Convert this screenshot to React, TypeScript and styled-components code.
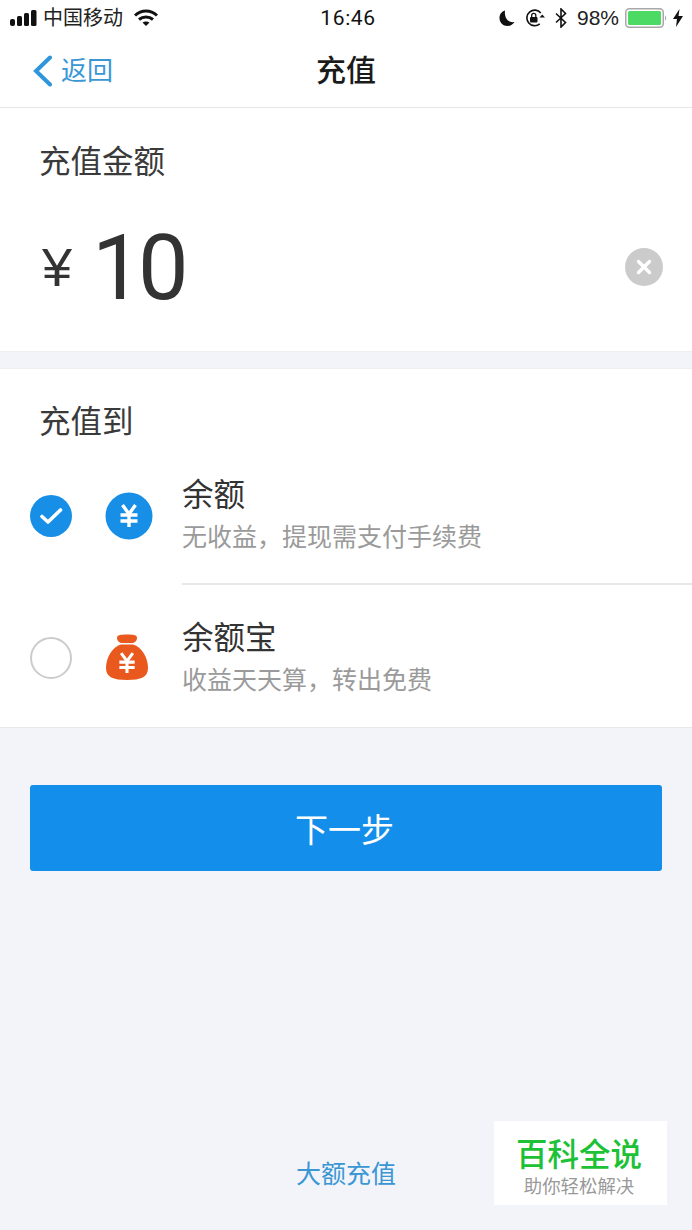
import React from 'react';
import styled, { createGlobalStyle } from 'styled-components';

const cjk = `"Liberation Sans", "Noto Sans CJK SC", sans-serif`;

const GlobalStyle = createGlobalStyle`
  html, body {
    margin: 0;
    padding: 0;
    background: #f3f4f9;
  }
  * {
    box-sizing: border-box;
  }
`;

const Page = styled.div`
  position: relative;
  width: 692px;
  height: 1230px;
  overflow: hidden;
  display: flex;
  flex-direction: column;
  background: #f3f4f9;
  font-family: ${cjk};
  color: #333;
`;

const Header = styled.div`
  background: #fff;
  height: 108px;
  border-bottom: 1px solid #e6e6e8;
  flex-shrink: 0;
`;

const StatusBar = styled.div`
  height: 36px;
  padding: 0 9px 0 10px;
  display: flex;
  align-items: center;
  justify-content: space-between;
  color: #111;
`;

const StatusSide = styled.div<{ $end?: boolean }>`
  width: 260px;
  display: flex;
  align-items: center;
  justify-content: ${p => (p.$end ? 'flex-end' : 'flex-start')};
`;

const Carrier = styled.span`
  font-size: 20px;
  line-height: 24px;
  margin: 0 11px 0 5px;
  color: #222;
`;

const Clock = styled.span`
  font-size: 21px;
  font-family: "Roboto", sans-serif;
  letter-spacing: 0.6px;
  margin-left: 3px;
`;

const StatusGap = styled.span<{ $width: number }>`
  width: ${p => p.$width}px;
`;

const Percent = styled.span`
  font-size: 21px;
  font-family: "Liberation Sans", sans-serif;
  margin: 0 6px 0 10px;
  color: #222;
`;

const Nav = styled.div`
  height: 71px;
  position: relative;
  display: flex;
  align-items: center;
  justify-content: center;
  padding-bottom: 1px;
`;

const Back = styled.div`
  position: absolute;
  left: 33px;
  top: 16px;
  display: flex;
  align-items: center;
  gap: 8px;
  color: #3a97d4;
  font-size: 26px;
  line-height: 38px;
`;

const Title = styled.div`
  font-size: 30px;
  font-weight: 500;
  color: #1a1a1a;
  line-height: 40px;
`;

const Section = styled.section`
  background: #fff;
  flex-shrink: 0;
`;

const AmountSection = styled(Section)`
  height: 244px;
  padding: 31px 29px 0 39px;
  border-bottom: 1px solid #eeeef2;
`;

const SectionTitle = styled.div`
  font-size: 31.5px;
  line-height: 46px;
  color: #3a3a3a;
`;

const AmountRow = styled.div`
  margin-top: 36px;
  display: flex;
  align-items: center;
  height: 92px;
`;

const Currency = styled.span`
  font-size: 54px;
  font-family: "Liberation Sans", sans-serif;
  line-height: 60px;
  width: 53px;
  padding-left: 3px;
  color: #333;
`;

const Amount = styled.span`
  font-size: 90px;
  font-family: "Roboto", sans-serif;
  font-weight: 400;
  letter-spacing: -4.5px;
  line-height: 92px;
  color: #333;
  flex: 1;
  padding-top: 4px;
`;

const ClearButton = styled.div`
  width: 38px;
  height: 38px;
  border-radius: 50%;
  background: #cbcbcb;
  display: flex;
  align-items: center;
  justify-content: center;
`;

const TargetSection = styled(Section)`
  height: 360px;
  margin-top: 16px;
  padding-top: 30px;
  border-top: 1px solid #eeeef2;
  border-bottom: 1px solid #e9e9ed;
  display: flex;
  flex-direction: column;
`;

const TargetTitle = styled(SectionTitle)`
  padding-left: 39px;
  margin-bottom: 2px;
`;

const Option = styled.div<{ $last?: boolean }>`
  height: ${p => (p.$last ? '140px' : '138px')};
  padding-top: ${p => (p.$last ? '5px' : '0')};
  display: flex;
  align-items: center;
  padding-left: 30px;
`;

const Radio = styled.div<{ $checked?: boolean }>`
  width: 42px;
  height: 42px;
  border-radius: 50%;
  flex-shrink: 0;
  display: flex;
  align-items: center;
  justify-content: center;
  background: ${p => (p.$checked ? '#178fe6' : '#fff')};
  border: ${p => (p.$checked ? 'none' : '2px solid #cccccc')};
`;

const OptionIcon = styled.div`
  width: 48px;
  height: 48px;
  margin-left: 33px;
  flex-shrink: 0;
`;

const OptionBody = styled.div<{ $divided?: boolean }>`
  align-self: stretch;
  flex: 1;
  margin-left: 29px;
  display: flex;
  flex-direction: column;
  justify-content: center;
  border-bottom: ${p => (p.$divided ? '2px solid #e8e8e8' : 'none')};
`;

const OptionName = styled.div`
  font-size: 31.5px;
  line-height: 44px;
  color: #333;
`;

const OptionHint = styled.div`
  font-size: 25px;
  line-height: 40px;
  color: #9a9a9a;
`;

const NextButton = styled.button`
  display: block;
  flex-shrink: 0;
  margin: 57px 30px 0;
  height: 86px;
  width: 632px;
  padding: 0 3px 0 0;
  border: none;
  border-radius: 3px;
  background: #148eeb;
  color: #fff;
  font-family: ${cjk};
  font-size: 33px;
`;

const LargeLink = styled.div`
  margin-top: 284px;
  text-align: center;
  font-size: 25px;
  line-height: 38px;
  color: #3a97d4;
`;

const Watermark = styled.div`
  position: absolute;
  left: 494px;
  top: 1121px;
  width: 173px;
  height: 84px;
  background: #fff;
  display: flex;
  flex-direction: column;
  align-items: center;
  padding: 14px 3px 0 0;
`;

const WatermarkTitle = styled.div`
  font-size: 31.5px;
  font-weight: 500;
  line-height: 40px;
  color: #1cc135;
`;

const WatermarkSub = styled.div`
  font-size: 18.4px;
  line-height: 24px;
  color: #999;
`;

const SignalIcon = () => (
  <svg width="28" height="18" viewBox="0 0 28 18" fill="#111">
    <rect x="0" y="10" width="5" height="7" rx="2" />
    <rect x="7" y="7" width="5" height="10" rx="1.5" />
    <rect x="14" y="4" width="5" height="13" rx="1.5" />
    <rect x="21" y="1" width="5.5" height="16" rx="1.5" />
  </svg>
);

const WifiIcon = () => (
  <svg width="24" height="18" viewBox="0 0 24 18" fill="none" stroke="#111" strokeWidth="3">
    <path d="M1 6.5 C7.5 0.5 16.5 0.5 23 6.5" />
    <path d="M5 10.5 C9 7 15 7 19 10.5" />
    <path d="M12 17 L8.5 13.5 C10.5 12 13.5 12 15.5 13.5 Z" fill="#111" stroke="none" />
  </svg>
);

const MoonIcon = () => (
  <svg width="16" height="17" viewBox="0 0 16 17" fill="#111">
    <path d="M6 0.5 C2.5 1.5 0.5 4.5 0.5 8 C0.5 12.5 4 16 8.5 16 C11.5 16 14 14.5 15.5 12 C10.5 13 5 9.5 6 0.5 Z" />
  </svg>
);

const RotationLockIcon = () => (
  <svg width="20" height="18" viewBox="0 0 20 18">
    <path d="M14.8 14.8 A7.8 7.8 0 1 1 15.8 4" fill="none" stroke="#111" strokeWidth="1.6" />
    <path d="M14.5 8.5 L20 8.5 L17.2 5.5 Z" fill="#111" />
    <rect x="5" y="8" width="7.5" height="5.5" rx="1" fill="#111" />
    <path d="M6.7 8 V6.5 A2 2 0 0 1 10.8 6.5 V8" fill="none" stroke="#111" strokeWidth="1.3" />
  </svg>
);

const BluetoothIcon = () => (
  <svg width="12" height="20" viewBox="0 0 12 20" fill="none" stroke="#111" strokeWidth="1.6">
    <path d="M1 5.5 L10.5 14.5 L6 19 V1 L10.5 5.5 L1 14.5" />
  </svg>
);

const BatteryIcon = () => (
  <svg width="43" height="20" viewBox="0 0 43 20">
    <rect x="0.75" y="0.75" width="37.5" height="18.5" rx="3.5" fill="#fff" stroke="#a8a8a8" strokeWidth="1.5" />
    <rect x="3" y="3" width="33" height="14" rx="1.5" fill="#4cd964" />
    <path d="M40 7.5 C41.5 8 41.5 12 40 12.5 Z" fill="#a8a8a8" />
  </svg>
);

const BoltIcon = () => (
  <svg width="10" height="18" viewBox="0 0 10 18" fill="#111">
    <path d="M6.5 0 L0 10 H4 L3 18 L10 7 H5.5 Z" />
  </svg>
);

const BackChevron = () => (
  <svg width="20" height="32" viewBox="0 0 20 32" fill="none" stroke="#2f96dc" strokeWidth="4" strokeLinecap="round">
    <path d="M17 2.5 L3 16 L17 29.5" />
  </svg>
);

const CrossIcon = () => (
  <svg width="16" height="16" viewBox="0 0 16 16" stroke="#fff" strokeWidth="3.4" strokeLinecap="round">
    <path d="M2.5 2.5 L13.5 13.5 M13.5 2.5 L2.5 13.5" />
  </svg>
);

const CheckIcon = () => (
  <svg width="26" height="20" viewBox="0 0 26 20" fill="none" stroke="#fff" strokeWidth="3.6" strokeLinecap="round" strokeLinejoin="round">
    <path d="M4 10.5 L10 16 L22.5 4" />
  </svg>
);

const YuanStrokes = ({ cx, cy, scale }: { cx: number; cy: number; scale: number }) => (
  <g transform={`translate(${cx} ${cy}) scale(${scale})`} fill="none" stroke="#fff" strokeWidth="3.4">
    <path d="M-6.5 -11 L0 -2 L6.5 -11" />
    <path d="M-8.5 -1 H8.5 M-8.5 5 H8.5 M0 -2 V11" />
  </g>
);

const BalanceIcon = () => (
  <svg width="48" height="48" viewBox="0 0 48 48">
    <circle cx="24" cy="24" r="23.5" fill="#178fe6" />
    <YuanStrokes cx={24} cy={24} scale={1} />
  </svg>
);

const MoneyBagIcon = () => (
  <svg width="48" height="48" viewBox="0 0 48 48">
    <path d="M12 4 C12 1 15 0.5 22 0.5 C29 0.5 32 1 32 4 C32 7 29 9 27 9 H17 C15 9 12 7 12 4 Z" fill="#e9591d" />
    <path d="M16 10.5 H28 C37 13 43 24 43 34 C43 43 36 46 22 46 C8 46 1 43 1 34 C1 24 7 13 16 10.5 Z" fill="#e9591d" />
    <YuanStrokes cx={22} cy={29} scale={0.9} />
  </svg>
);

export default function App() {
  return (
    <Page>
      <GlobalStyle />
      <Header>
        <StatusBar>
          <StatusSide>
            <SignalIcon />
            <Carrier>中国移动</Carrier>
            <WifiIcon />
          </StatusSide>
          <Clock>16:46</Clock>
          <StatusSide $end>
            <MoonIcon />
            <StatusGap $width={10} />
            <RotationLockIcon />
            <StatusGap $width={10} />
            <BluetoothIcon />
            <Percent>98%</Percent>
            <BatteryIcon />
            <StatusGap $width={5} />
            <BoltIcon />
          </StatusSide>
        </StatusBar>
        <Nav>
          <Back>
            <BackChevron />
            <span>返回</span>
          </Back>
          <Title>充值</Title>
        </Nav>
      </Header>

      <AmountSection>
        <SectionTitle>充值金额</SectionTitle>
        <AmountRow>
          <Currency>¥</Currency>
          <Amount>10</Amount>
          <ClearButton>
            <CrossIcon />
          </ClearButton>
        </AmountRow>
      </AmountSection>

      <TargetSection>
        <TargetTitle>充值到</TargetTitle>
        <Option>
          <Radio $checked>
            <CheckIcon />
          </Radio>
          <OptionIcon>
            <BalanceIcon />
          </OptionIcon>
          <OptionBody $divided>
            <OptionName>余额</OptionName>
            <OptionHint>无收益，提现需支付手续费</OptionHint>
          </OptionBody>
        </Option>
        <Option $last>
          <Radio />
          <OptionIcon>
            <MoneyBagIcon />
          </OptionIcon>
          <OptionBody>
            <OptionName>余额宝</OptionName>
            <OptionHint>收益天天算，转出免费</OptionHint>
          </OptionBody>
        </Option>
      </TargetSection>

      <NextButton>下一步</NextButton>
      <LargeLink>大额充值</LargeLink>

      <Watermark>
        <WatermarkTitle>百科全说</WatermarkTitle>
        <WatermarkSub>助你轻松解决</WatermarkSub>
      </Watermark>
    </Page>
  );
}
